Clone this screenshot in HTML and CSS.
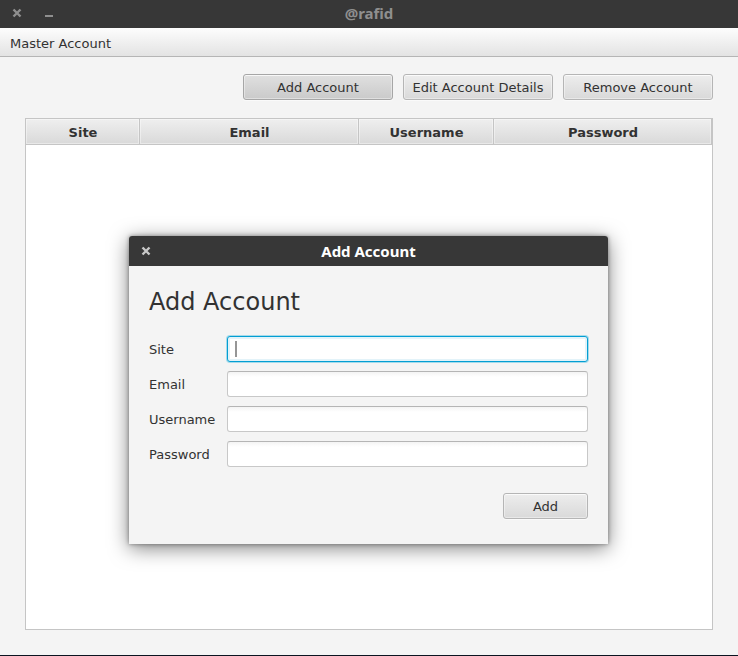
FILE: index.html
```html
<!DOCTYPE html>
<html lang="en">
<head>
<meta charset="utf-8">
<meta name="viewport" content="width=device-width, initial-scale=1">
<title>@rafid</title>
<link rel="stylesheet" href="styles.css">
</head>
<body>
<main class="window">
  <header class="titlebar titlebar-inactive">
    <div class="window-controls">
      <button type="button" class="window-button" aria-label="Close">
        <svg width="10" height="10" viewBox="0 0 10 10" aria-hidden="true"><path d="M1.5 1.5 8.5 8.5M8.5 1.5 1.5 8.5" fill="none" stroke="currentColor" stroke-width="2.4"/></svg>
      </button>
      <button type="button" class="window-button" aria-label="Minimize">
        <svg width="10" height="10" viewBox="0 0 10 10" aria-hidden="true"><path d="M1 7h8v2H1z" fill="currentColor"/></svg>
      </button>
    </div>
    <h1 class="titlebar-text">@rafid</h1>
  </header>
  <nav class="menubar">
    <button type="button" class="menu-item">Master Account</button>
  </nav>
  <section class="content">
    <div class="toolbar">
      <button type="button" class="button button-pressed">Add Account</button>
      <button type="button" class="button">Edit Account Details</button>
      <button type="button" class="button">Remove Account</button>
    </div>
    <div class="table-view">
      <table class="accounts">
        <colgroup>
          <col class="col-site">
          <col class="col-email">
          <col class="col-username">
          <col>
        </colgroup>
        <thead>
          <tr>
            <th scope="col">Site</th>
            <th scope="col">Email</th>
            <th scope="col">Username</th>
            <th scope="col">Password</th>
          </tr>
        </thead>
        <tbody></tbody>
      </table>
    </div>
  </section>
</main>

<div class="dialog" role="dialog" aria-labelledby="dialog-title">
  <header class="titlebar dialog-titlebar">
    <div class="window-controls">
      <button type="button" class="window-button" aria-label="Close dialog">
        <svg width="10" height="10" viewBox="0 0 10 10" aria-hidden="true"><path d="M1.5 1.5 8.5 8.5M8.5 1.5 1.5 8.5" fill="none" stroke="currentColor" stroke-width="2.4"/></svg>
      </button>
    </div>
    <h2 class="titlebar-text" id="dialog-title">Add Account</h2>
  </header>
  <form class="dialog-body">
    <h3 class="dialog-heading">Add Account</h3>
    <div class="fields">
      <label for="site">Site</label>
      <input class="field field-active" id="site" type="text">
      <label for="email">Email</label>
      <input class="field" id="email" type="text">
      <label for="username">Username</label>
      <input class="field" id="username" type="text">
      <label for="password">Password</label>
      <input class="field" id="password" type="password">
    </div>
    <div class="dialog-actions">
      <button type="button" class="button button-add">Add</button>
    </div>
  </form>
</div>
</body>
</html>
```
FILE: styles.css
```css
* {
  box-sizing: border-box;
}

body {
  margin: 0;
  background: #f4f4f4;
  color: #323232;
  font: 13px/16px "DejaVu Sans", sans-serif;
}

button,
input {
  font: inherit;
  color: inherit;
}

h1,
h2,
h3 {
  margin: 0;
}

.window {
  display: flex;
  flex-direction: column;
  min-height: 100vh;
  border-bottom: 1px solid #0b1420;
}

/* Title bars */
.titlebar {
  display: grid;
  grid-template-columns: 1fr auto 1fr;
  align-items: center;
  height: 28px;
  padding: 0 12px 2px;
  background: #373737;
  color: #fff;
}

.titlebar-inactive {
  color: #8f8f8f;
}

.window-controls {
  display: flex;
  gap: 22px;
}

.window-button {
  width: 10px;
  height: 10px;
  padding: 0;
  border: 0;
  background: none;
}

.window-button svg {
  display: block;
}

.titlebar-text {
  font: bold 15px/20px "Noto Sans", "Open Sans", sans-serif;
}

/* Menu */
.menubar {
  display: flex;
  height: 29px;
  padding: 0 10px;
  border-bottom: 1px solid #b5b5b5;
  background: linear-gradient(#fdfdfd, #e3e3e3);
}

.menu-item {
  padding: 4px 0 0;
  border: 0;
  background: none;
}

/* Main content */
.content {
  display: flex;
  flex: 1;
  flex-direction: column;
  gap: 18px;
  padding: 17px 25px 25px;
}

.toolbar {
  display: flex;
  justify-content: flex-end;
  gap: 10px;
}

.button {
  width: 150px;
  height: 26px;
  padding: 2px 0 0;
  border: 1px solid #b5b5b5;
  border-radius: 3px;
  background: linear-gradient(#ededed, #d9d9d9);
  box-shadow: inset 0 0 0 1px rgba(255, 255, 255, 0.4), inset 0 1px 0 rgba(255, 255, 255, 0.6), 0 1px 0 #fafafa;
  white-space: nowrap;
}

.button-pressed {
  border-color: #a6a6a6;
  background: linear-gradient(#e0e0e0, #cacaca);
}

.table-view {
  flex: 1;
  border: 1px solid #c5c5c5;
  background: #fff;
}

.accounts {
  width: 100%;
  border-collapse: separate;
  border-spacing: 0;
  table-layout: fixed;
}

.col-site {
  width: 114px;
}

.col-email {
  width: 219px;
}

.col-username {
  width: 135px;
}

.accounts th {
  height: 26px;
  padding: 2px 0 0 1px;
  border-right: 1px solid #c5c5c5;
  border-bottom: 1px solid #c5c5c5;
  background: linear-gradient(#efefef, #d9d9d9);
  box-shadow: inset 0 0 0 1px rgba(255, 255, 255, 0.4);
}

/* Dialog window floating over the main one */
.dialog {
  position: absolute;
  top: 236px;
  left: 129px;
  width: 479px;
  border-radius: 3px 3px 0 0;
  background: #f4f4f4;
  box-shadow: 0 4px 20px rgba(0, 0, 0, 0.5), 0 0 4px rgba(0, 0, 0, 0.4);
}

.dialog-titlebar {
  height: 30px;
  padding-bottom: 0;
  border-radius: 3px 3px 0 0;
}

.dialog-titlebar .window-button {
  color: #c8c8c8;
}

.dialog-body {
  padding: 20px 20px 25px;
}

.dialog-heading {
  margin-bottom: 18px;
  font-size: 24px;
  font-weight: normal;
  line-height: 32px;
}

.fields {
  display: grid;
  grid-template-columns: 68px 1fr;
  align-items: center;
  gap: 9px 10px;
}

.fields label {
  padding-top: 2px;
}

.field {
  width: 100%;
  height: 26px;
  padding: 0 8px;
  border: 1px solid #c8c8c8;
  border-top-color: #b5b5b5;
  border-radius: 3px;
  outline: none;
  background: linear-gradient(#f4f4f4, #fff 5px);
}

.field-active {
  border-color: #039ed3;
  background: linear-gradient(#969696, #969696) 7px center / 2px 16px no-repeat #fff;
  box-shadow: 0 0 0 1px #a5dbeb, inset 0 0 0 2px #e3f3f9;
}

.dialog-actions {
  display: flex;
  justify-content: flex-end;
  margin-top: 26px;
}

.button-add {
  width: 85px;
}
```
